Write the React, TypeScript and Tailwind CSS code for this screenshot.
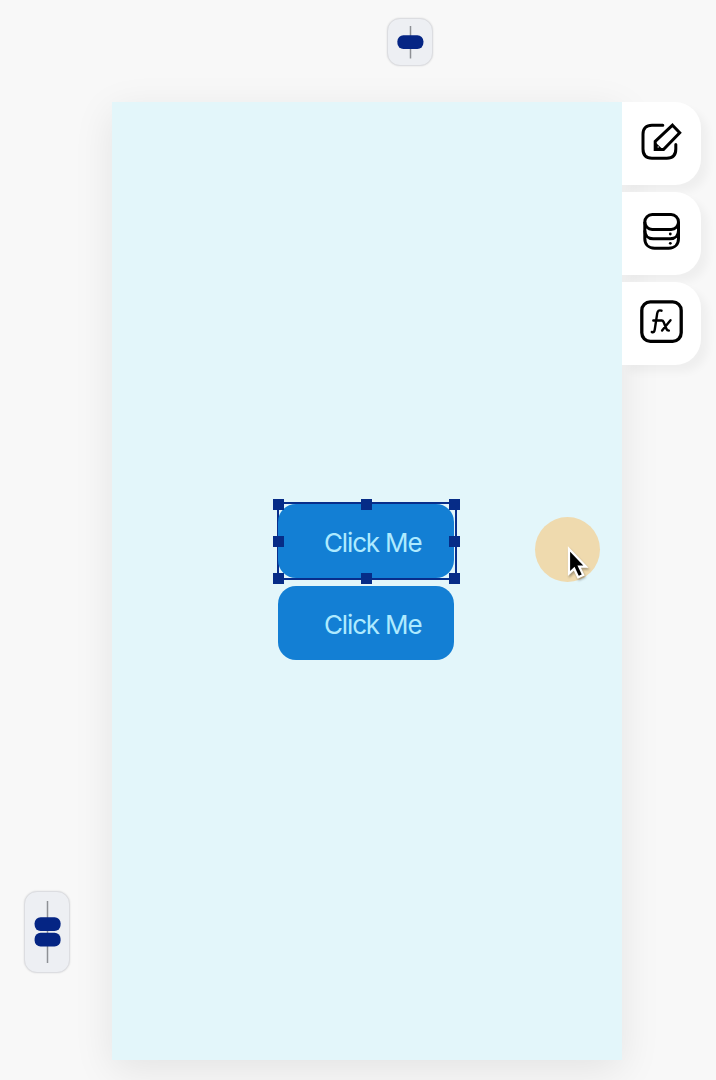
import type { ReactNode } from "react";

const handles = [
  "left-[-6px] top-[-5px]",
  "left-[82px] top-[-5px]",
  "left-[170px] top-[-5px]",
  "left-[-6px] top-[32px]",
  "left-[170px] top-[32px]",
  "left-[-6px] top-[69px]",
  "left-[82px] top-[69px]",
  "left-[170px] top-[69px]",
];

function EditIcon() {
  return (
    <svg width="46" height="46" viewBox="-0.5 0 46 46" fill="none" stroke="#000" strokeWidth="3" strokeLinecap="round" strokeLinejoin="round">
      <path d="M24.3 6.2H13.5c-5.8 0-9 3.2-9 9V30c0 6 3.2 9.2 9 9.2h14.8c5.8 0 9-3.2 9-9.2v-4.5" />
      <path d="M34 6.2 41.2 13.7 25 30.5H16.7v-8Z" strokeLinejoin="miter" />
      <path d="m17 23.5 7.5 7H17Z" fill="#000" stroke="none" />
      <circle cx="19.7" cy="28" r="0.8" fill="#ccc" stroke="none" />
    </svg>
  );
}

function DatabaseIcon() {
  return (
    <svg width="46" height="46" viewBox="-0.5 0 46 46" fill="none" stroke="#000" strokeWidth="3">
      <rect x="6.3" y="5.6" width="33.7" height="14.8" rx="7.4" />
      <path d="M6.3 13v16.4c0 6 3.8 9.8 9.8 9.8h14.1c6 0 9.8-3.8 9.8-9.8V13" />
      <path d="M6.3 21.5c0 4.8 3.3 8.3 8.3 8.3h17.1c5 0 8.3-3.5 8.3-8.3" />
      <circle cx="31.8" cy="25" r="1.4" fill="#000" stroke="none" />
      <circle cx="31.8" cy="34.3" r="1.4" fill="#000" stroke="none" />
    </svg>
  );
}

function FunctionIcon() {
  return (
    <svg width="46" height="46" viewBox="-0.5 0 46 46" fill="none" stroke="#000" strokeLinecap="round" strokeLinejoin="round">
      <rect x="3.3" y="2.9" width="39.4" height="39.4" rx="8.5" strokeWidth="3.3" />
      <path d="M23 11.7c-2.5-1-3.9.1-4.3 2.7L16.3 30.3c-.4 2.4-1.1 3.4-3 2.7M14.8 21.5h8.4c1 0 1.5.5 1.9 1.5l2.9 7c.4 1.1.9 1.6 2.4 1.6M32 21.3 23.6 31.6" strokeWidth="2.4" />
    </svg>
  );
}

function SideTab({ label, children }: { label: string; children: ReactNode }) {
  return (
    <button aria-label={label} className="flex h-[83px] w-[79px] justify-center rounded-r-[26px] bg-white pr-px pt-[17px] shadow-[7px_7px_9px_rgba(0,0,0,0.04)]">
      {children}
    </button>
  );
}

function CanvasButton({ selected = false }: { selected?: boolean }) {
  return (
    <div className={selected ? "relative h-[78px] w-[180px] border-2 border-[#082e8b] bg-[#e3f6fa]" : "h-[74px] w-[176px]"}>
      <button className={`flex h-[74px] w-[176px] items-center rounded-[18px] bg-[#137fd4] pl-[46px] pt-[2px] font-['Inter','Liberation_Sans',sans-serif] text-[26px] tracking-[-1.15px] text-[#aeeaff] ${selected ? "-ml-px" : ""}`}>
        <span className="whitespace-nowrap">Click Me</span>
      </button>
      {selected &&
        handles.map((position) => (
          <span key={position} className={`absolute size-[11px] bg-[#062c87] ${position}`} />
        ))}
    </div>
  );
}

export default function App() {
  return (
    <div className="flex h-[1080px] w-[716px] flex-col overflow-hidden bg-[#f8f8f8]">
      <header className="flex h-[102px] shrink-0 pl-[387px] pt-[18px]">
        <div className="flex h-[48px] w-[46px] items-center justify-center rounded-[13px] border border-[#dcdde1] bg-[#edeff3] shadow-[0_0_2px_rgba(0,0,0,0.12)]">
          <svg width="30" height="36" viewBox="0 0 30 36">
            <path d="M15.5 2v32.5" stroke="#8e9095" strokeWidth="1.5" />
            <rect x="2.4" y="11.3" width="26" height="13.6" rx="6" fill="#052584" />
          </svg>
        </div>
      </header>
      <main className="flex h-[958px]">
        <aside className="flex w-[112px] shrink-0 flex-col pl-[24px] pt-[789px]">
          <div className="flex h-[82px] w-[46px] shrink-0 items-center justify-center rounded-[13px] border border-[#dcdde1] bg-[#edeff3] shadow-[0_0_2px_rgba(0,0,0,0.12)]">
            <svg width="30" height="64" viewBox="0 0 30 64">
              <path d="M15.5 1v62" stroke="#8e9095" strokeWidth="1.5" />
              <rect x="2.6" y="17.3" width="26" height="13.7" rx="6" fill="#052584" />
              <rect x="2.6" y="32.7" width="26" height="13.7" rx="6" fill="#052584" />
            </svg>
          </div>
        </aside>
        <section className="relative flex w-[510px] shrink-0 flex-col bg-[#e3f6fa] pl-[165px] pt-[400px] shadow-[0_10px_38px_rgba(0,0,0,0.085)]">
          <CanvasButton selected />
          <div className="ml-px mt-[6px]">
            <CanvasButton />
          </div>
          <div className="absolute left-[423px] top-[415px] size-[65px] rounded-full bg-[#efdaae]" />
          <svg className="absolute left-[454px] top-[443px] overflow-visible drop-shadow-[1px_2px_1px_rgba(0,0,0,0.3)]" width="24" height="38" viewBox="0 0 24 38">
            <path d="M3 4v24.5l5.2-4.8 4 8.5 5-2.3-4-8.2H20Z" fill="#000" stroke="#fff" strokeWidth="2.2" strokeLinejoin="miter" />
          </svg>
        </section>
        <nav className="relative flex w-[79px] flex-col gap-[7px]">
          <SideTab label="Edit"><EditIcon /></SideTab>
          <SideTab label="Data"><DatabaseIcon /></SideTab>
          <SideTab label="Functions"><FunctionIcon /></SideTab>
        </nav>
      </main>
    </div>
  );
}
